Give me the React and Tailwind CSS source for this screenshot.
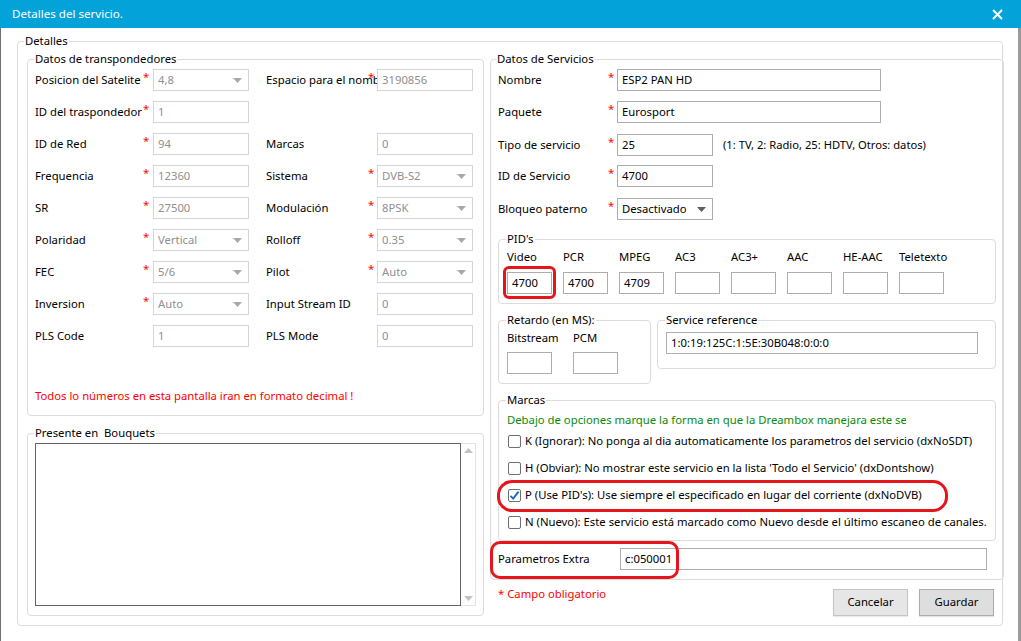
import React from "react";
import clsx from "clsx";

const Caret = ({ dark }) => (
  <svg width="9" height="5" viewBox="0 0 9 5" className="ml-auto mr-[6px] shrink-0">
    <polygon points="0,0 9,0 4.5,5" fill={dark ? "#5f5f5f" : "#a8a8a8"} />
  </svg>
);

const Box = ({ value, w = "w-[96px]", disabled, select, className, children }) => (
  <div
    className={clsx(
      "relative flex h-[22px] shrink-0 items-center border bg-white pl-[4px] leading-[16px]",
      w,
      disabled ? "border-[#d5d5d5] text-[#8f8f8f]" : "border-[#adadad] text-black",
      className
    )}
  >
    <span className="whitespace-nowrap">{value}</span>
    {select && <Caret dark={!disabled} />}
    {children}
  </div>
);

const Star = ({ show, w = "w-[10px]" }) => (
  <div className={clsx("shrink-0 self-start leading-[16px] text-[#ff0000]", w)}>{show ? "*" : ""}</div>
);

const Group = ({ title, className, legendClass = "ml-[-1px]", children }) => (
  <fieldset className={clsx("rounded-[4px] border border-[#dcdcdc]", className)}>
    <legend className={clsx("px-[1px] leading-[16px]", legendClass)}>{title}</legend>
    {children}
  </fieldset>
);

const transRows = [
  [["Posicion del Satelite", true, "4,8", true], ["Espacio para el nombre", true, "3190856", false]],
  [["ID del traspondedor", true, "1", false], null],
  [["ID de Red", true, "94", false], ["Marcas", false, "0", false]],
  [["Frequencia", true, "12360", false], ["Sistema", true, "DVB-S2", true]],
  [["SR", true, "27500", false], ["Modulación", true, "8PSK", true]],
  [["Polaridad", true, "Vertical", true], ["Rolloff", true, "0.35", true]],
  [["FEC", true, "5/6", true], ["Pilot", true, "Auto", true]],
  [["Inversion", true, "Auto", true], ["Input Stream ID", false, "0", false]],
  [["PLS Code", false, "1", false], ["PLS Mode", false, "0", false]],
];

const pids = [
  ["Video", "4700"],
  ["PCR", "4700"],
  ["MPEG", "4709"],
  ["AC3", ""],
  ["AC3+", ""],
  ["AAC", ""],
  ["HE-AAC", ""],
  ["Teletexto", ""],
];

const flags = [
  ["K (Ignorar): No ponga al dia automaticamente los parametros del servicio (dxNoSDT)", false],
  ["H (Obviar): No mostrar este servicio en la lista 'Todo el Servicio' (dxDontshow)", false],
  ["P (Use PID's): Use siempre el especificado en lugar del corriente (dxNoDVB)", true],
  ["N (Nuevo): Este servicio está marcado como Nuevo desde el último escaneo de canales.", false],
];

const Check = ({ checked }) => (
  <div className="flex h-[13px] w-[13px] shrink-0 items-center justify-center rounded-[2px] border border-[#6f6f6f] bg-white">
    {checked && (
      <svg width="11" height="11" viewBox="0 0 11 11">
        <path d="M1.5 5.8 L4.2 8.6 L9.6 1.6" fill="none" stroke="#1a64c0" strokeWidth="1.8" />
      </svg>
    )}
  </div>
);

const ServiceRow = ({ label, children, className }) => (
  <div className={clsx("flex h-[22px] items-center", className)}>
    <div className="w-[110px] shrink-0 leading-[16px]">{label}</div>
    <Star show w="w-[9px]" />
    {children}
  </div>
);

export default function App() {
  return (
    <div className="flex h-[641px] w-[1021px] flex-col overflow-hidden bg-white font-['Noto_Sans',sans-serif] text-[11.3px] text-black">
      {/* Title bar */}
      <div className="flex h-[28px] shrink-0 items-center bg-[#03a3d9] pl-[12px] pr-[18px] text-white">
        <span className="text-[11.6px]">Detalles del servicio.</span>
        <svg width="11" height="11" viewBox="0 0 11 11" className="ml-auto">
          <path d="M1 1 L10 10 M10 1 L1 10" stroke="#fff" strokeWidth="2" />
        </svg>
      </div>

      {/* Window body */}
      <div className="flex flex-1 border-l border-r-[3px] border-l-[#707070] border-r-[#9a9a9a] px-[16px] pb-[15px] pt-[5px]">
        <Group title="Detalles" legendClass="ml-[-3px]" className="flex flex-1 gap-[6px] pb-[9px] pl-[9px] pr-[8px]">
          {/* Left column */}
          <div className="mt-[2px] flex w-[457px] flex-col">
            <Group title="Datos de transpondedores" className="h-[365px] shrink-0 px-[7px]">
              <div className="mt-[2px] flex flex-col gap-[10px]">
                {transRows.map((row, i) => (
                  <div key={i} className="flex h-[22px] items-center">
                    <div className="w-[108px] shrink-0 leading-[16px]">{row[0][0]}</div>
                    <Star show={row[0][1]} />
                    <Box value={row[0][2]} select={row[0][3]} disabled />
                    {row[1] && (
                      <>
                        <div className="ml-[17px] w-[102px] shrink-0 whitespace-nowrap leading-[16px]">{row[1][0]}</div>
                        <Star show={row[1][1]} w="w-[9px]" />
                        <Box value={row[1][2]} select={row[1][3]} disabled />
                      </>
                    )}
                  </div>
                ))}
              </div>
              <div className="mt-[41px] leading-[16px] text-[#ff0000]">
                Todos lo números en esta pantalla iran en formato decimal !
              </div>
            </Group>

            <Group title="Presente en  Bouquets" className="mt-[9px] flex flex-1 flex-col whitespace-pre px-[7px] pb-[9px]">
              <div className="mt-[2px] flex flex-1">
                <div className="flex-1 border border-[#646464] bg-white" />
                <div className="flex w-[15px] flex-col items-center justify-between border-y border-r border-[#e3e3e3] py-[4px]">
                  <svg width="9" height="5" viewBox="0 0 9 5">
                    <polygon points="0,5 9,5 4.5,0" fill="#c2c2c2" />
                  </svg>
                  <svg width="9" height="5" viewBox="0 0 9 5">
                    <polygon points="0,0 9,0 4.5,5" fill="#c2c2c2" />
                  </svg>
                </div>
              </div>
            </Group>
          </div>

          {/* Right column */}
          <div className="mt-[2px] flex w-[504px] flex-col">
            <Group title="Datos de Servicios" legendClass="ml-[-2px]" className="px-[7px] pb-[9px]">
              <ServiceRow label="Nombre" className="mt-[2px]">
                <Box value="ESP2 PAN HD" w="w-[264px]" />
              </ServiceRow>
              <ServiceRow label="Paquete" className="mt-[10px]">
                <Box value="Eurosport" w="w-[264px]" />
              </ServiceRow>
              <ServiceRow label="Tipo de servicio" className="mt-[11px]">
                <Box value="25" />
                <span className="ml-[10px] text-[11.2px] leading-[16px]">(1: TV, 2: Radio, 25: HDTV, Otros: datos)</span>
              </ServiceRow>
              <ServiceRow label="ID de Servicio" className="mt-[9px]">
                <Box value="4700" />
              </ServiceRow>
              <ServiceRow label="Bloqueo paterno" className="mt-[11px]">
                <Box value="Desactivado" select />
              </ServiceRow>

              <Group title="PID's" className="mt-[11px] px-[8px] pb-[9px]">
                <div className="mt-[2px] flex gap-[11px]">
                  {pids.map(([name, val], i) => (
                    <div key={name} className="flex w-[45px] flex-col">
                      <div className="whitespace-nowrap leading-[16px]">{name}</div>
                      <Box value={val} w="w-[45px]" className="mt-[7px] pl-[3px]">
                        {i === 0 && (
                          <div className="absolute bottom-[-6px] left-[-5px] right-[-5px] top-[-7px] rounded-[6px] border-[3px] border-[#e8141c]" />
                        )}
                      </Box>
                    </div>
                  ))}
                </div>
              </Group>

              <div className="mt-[8px] flex items-start gap-[6px]">
                <Group title="Retardo (en MS):" className="w-[153px] shrink-0 px-[8px] pb-[9px]">
                  <div className="mt-[2px] flex gap-[21px]">
                    <div className="flex w-[45px] flex-col">
                      <div className="leading-[16px]">Bitstream</div>
                      <Box value="" w="w-[45px]" className="mt-[6px]" />
                    </div>
                    <div className="flex w-[45px] flex-col">
                      <div className="leading-[16px]">PCM</div>
                      <Box value="" w="w-[45px]" className="mt-[6px]" />
                    </div>
                  </div>
                </Group>
                <Group title="Service reference" className="flex-1 px-[8px] pb-[14px]">
                  <Box value="1:0:19:125C:1:5E:30B048:0:0:0" w="w-[312px]" className="mt-[4px] pl-[3px]" />
                </Group>
              </div>

              <Group title="Marcas" className="mt-[8px] px-[8px] pb-[10px]">
                <div className="mt-[4px] w-[399px] overflow-hidden whitespace-nowrap leading-[16px] text-[#0a8a0a]">
                  Debajo de opciones marque la forma en que la Dreambox manejara este servicio
                </div>
                <div className="mt-[5px] flex flex-col gap-[11px]">
                  {flags.map(([text, checked]) => (
                    <div key={text} className="relative flex h-[16px] items-center gap-[4px] pl-[1px]">
                      <Check checked={checked} />
                      <span className="whitespace-nowrap leading-[16px]">{text}</span>
                      {checked && (
                        <div className="absolute left-[-10px] top-[-7px] h-[32px] w-[451px] rounded-[15px] border-[3px] border-[#e8141c]" />
                      )}
                    </div>
                  ))}
                </div>
              </Group>

              <div className="relative mt-[7px] flex h-[22px] items-center">
                <div className="w-[122px] shrink-0 leading-[16px]">Parametros Extra</div>
                <Box value="c:050001" w="w-[367px]" className="pl-[3px]" />
                <div className="absolute left-[-8px] top-[-7px] h-[38px] w-[189px] rounded-[10px] border-[3px] border-[#e8141c]" />
              </div>
            </Group>

            <div className="mt-[9px] flex items-start">
              <div className="ml-[8px] mt-[-3px] leading-[16px] text-[#ff0000]">* Campo obligatorio</div>
              <button className="ml-auto h-[27px] w-[75px] border border-[#c4c4c4] bg-[#e6e6e6] shadow-[0_1px_1px_rgba(0,0,0,0.08)]">
                Cancelar
              </button>
              <button className="ml-[11px] h-[27px] w-[75px] border border-[#adadad] bg-[#dedede] shadow-[0_1px_1px_rgba(0,0,0,0.1)]">
                Guardar
              </button>
            </div>
          </div>
        </Group>
      </div>
      <div className="h-[2px] shrink-0 bg-[#03a3d9]" />
    </div>
  );
}
